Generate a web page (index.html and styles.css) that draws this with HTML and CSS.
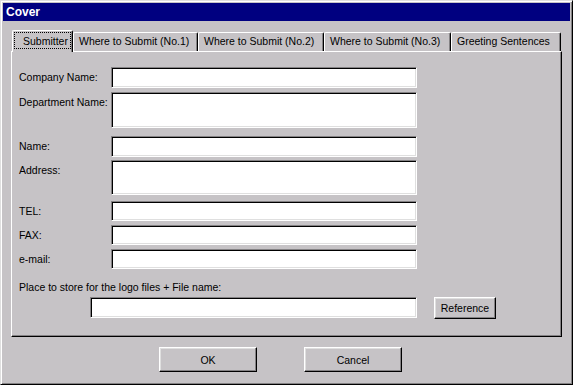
FILE: index.html
```html
<!DOCTYPE html>
<html lang="en">
<head>
  <meta charset="UTF-8">
  <title>Cover</title>
  <link rel="stylesheet" href="styles.css">
</head>
<body>
  <div class="window">
    <div class="titlebar">Cover</div>
    <div class="dialog-body">
      <div class="tabs">
        <div class="tab active"><span>Submitter</span></div>
        <div class="tab tab-1">Where to Submit (No.1)</div>
        <div class="tab tab-2">Where to Submit (No.2)</div>
        <div class="tab tab-3">Where to Submit (No.3)</div>
        <div class="tab tab-4">Greeting Sentences</div>
      </div>
      <div class="panel">
        <div class="row">
          <label class="label">Company Name:</label>
          <input class="field" type="text">
        </div>
        <div class="row gap-4">
          <label class="label">Department Name:</label>
          <input class="field tall" type="text">
        </div>
        <div class="row gap-8">
          <label class="label">Name:</label>
          <input class="field" type="text">
        </div>
        <div class="row gap-3">
          <label class="label">Address:</label>
          <input class="field tall-2" type="text">
        </div>
        <div class="row gap-6">
          <label class="label">TEL:</label>
          <input class="field short" type="text">
        </div>
        <div class="row gap-4">
          <label class="label">FAX:</label>
          <input class="field short" type="text">
        </div>
        <div class="row gap-4">
          <label class="label">e-mail:</label>
          <input class="field short" type="text">
        </div>
        <div class="logo-label">Place to store for the logo files + File name:</div>
        <div class="logo-row">
          <input class="field logo-field" type="text">
          <button class="btn ref-btn">Reference</button>
        </div>
      </div>
      <div class="actions">
        <button class="btn action-btn">OK</button>
        <button class="btn action-btn">Cancel</button>
      </div>
    </div>
  </div>
</body>
</html>
```

FILE: styles.css
```css
/* Win95 style dialog */
body {
  margin: 0;
  background: #c6c3c6;
  font-family: "Liberation Sans", Arial, sans-serif;
  font-size: 10.5px;
  color: #000000;
}

.window {
  width: 573px;
  height: 385px;
  box-sizing: border-box;
  padding: 2px;
  border: 1px solid;
  border-color: #dfdfdf #000000 #000000 #dfdfdf;
  box-shadow: inset 1px 1px #ffffff, inset -1px -1px #848284;
  background: #c6c3c6;
}

.titlebar {
  height: 18px;
  line-height: 18px;
  padding-left: 3px;
  background: #000080;
  color: #ffffff;
  font-weight: bold;
  font-size: 12px;
}

.dialog-body {
  padding: 0 8px;
}

.tabs {
  display: flex;
  align-items: flex-end;
  height: 21px;
  margin-top: 9px;
  padding-left: 1px;
}

.tab {
  box-sizing: border-box;
  height: 19px;
  line-height: 17px;
  padding-left: 5px;
  border: 1px solid;
  border-bottom: none;
  border-color: #ffffff #000000 #000000 #ffffff;
  border-radius: 2px 2px 0 0;
  box-shadow: inset -1px 0 #848284;
  white-space: nowrap;
  overflow: hidden;
}

.tab.active {
  position: relative;
  z-index: 1;
  height: 22px;
  width: 61px;
  margin-bottom: -1px;
  padding: 1px 1px 2px 1px;
  background: #c6c3c6;
}

.tab.active span {
  display: block;
  height: 17px;
  line-height: 16px;
  padding-left: 8px;
  border: 1px dotted #000000;
  box-sizing: border-box;
}

.tab-1 { width: 125px; }
.tab-2 { width: 126px; }
.tab-3 { width: 127px; }
.tab-4 { width: 110px; }

.panel {
  box-sizing: border-box;
  height: 286px;
  padding: 15px 0 0 7px;
  border: 1px solid;
  border-color: #ffffff #000000 #000000 #ffffff;
  box-shadow: inset -1px -1px #848284;
}

.row {
  display: flex;
  align-items: flex-start;
}

.gap-3 { margin-top: 3px; }
.gap-4 { margin-top: 4px; }
.gap-6 { margin-top: 6px; }
.gap-8 { margin-top: 8px; }

.label {
  width: 92px;
  flex: none;
  padding-top: 4px;
  line-height: 13px;
  white-space: nowrap;
}

.field {
  appearance: none;
  box-sizing: border-box;
  width: 306px;
  height: 21px;
  margin: 0;
  padding: 0 3px;
  border: 1px solid;
  border-color: #848284 #ffffff #ffffff #848284;
  box-shadow: inset 1px 1px #000000, inset -1px -1px #dfdfdf;
  background: #ffffff;
  font: inherit;
  outline: none;
}

.field.tall { height: 36px; }
.field.tall-2 { height: 35px; }
.field.short { height: 20px; }

.logo-label {
  margin-top: 12px;
  line-height: 13px;
}

.logo-row {
  display: flex;
  align-items: flex-start;
  margin-top: 3px;
  padding-left: 71px;
}

.logo-field {
  width: 327px;
}

.btn {
  box-sizing: border-box;
  margin: 0;
  padding: 0;
  border: 1px solid;
  border-color: #ffffff #000000 #000000 #ffffff;
  box-shadow: inset -1px -1px #848284, inset 1px 1px #dfdfdf;
  background: #c6c3c6;
  font: inherit;
  color: #000000;
}

.ref-btn {
  width: 62px;
  height: 22px;
  margin-left: 17px;
}

.actions {
  display: flex;
  gap: 47px;
  margin-top: 10px;
  padding-left: 148px;
}

.action-btn {
  width: 98px;
  height: 25px;
}
```
